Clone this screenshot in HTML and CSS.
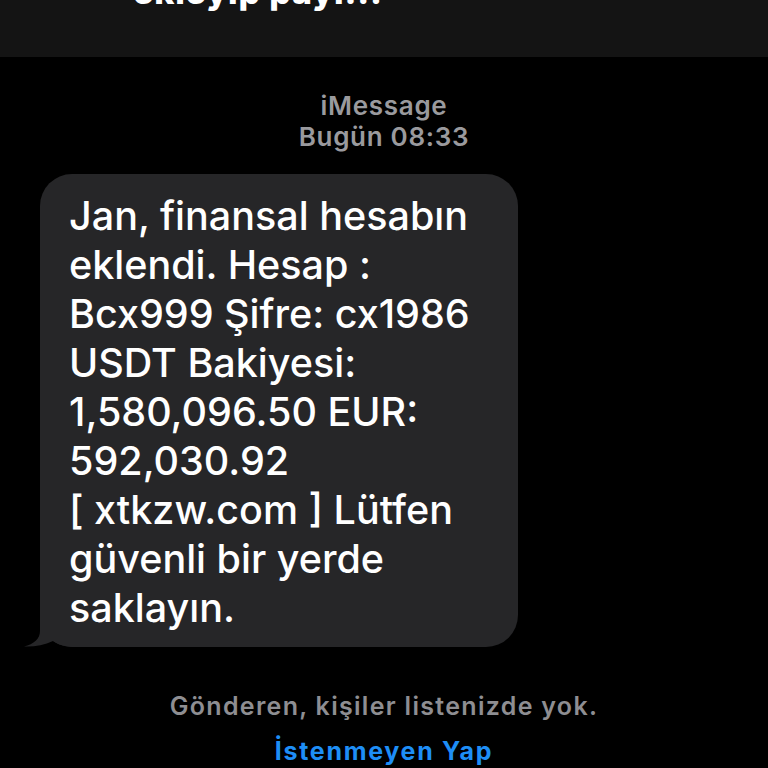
FILE: index.html
```html
<!DOCTYPE html>
<html lang="tr">
<head>
<meta charset="utf-8">
<link rel="stylesheet" href="styles.css">
</head>
<body>
<div class="screen">
  <div class="topbar"><div class="toptext">ekleyip payl...</div></div>
  <div class="header">
    <div class="service">iMessage</div>
    <div class="time">Bugün 08:33</div>
  </div>
  <div class="thread">
    <div class="bubble">
      <svg class="tail" width="60" height="40" viewBox="0 0 60 40"><path d="M16 0 V24 C16 32 10 37 0 39.5 C10 40 20 38 29 34 C33 37 38 39 48 40 H60 V0 Z" fill="#262628"/></svg>
      <p class="msg">Jan, finansal hesabın<br>eklendi. Hesap :<br>Bcx999 Şifre: cx1986<br>USDT Bakiyesi:<br>1,580,096.50 EUR:<br>592,030.92<br>[ xtkzw.com ] Lütfen<br>güvenli bir yerde<br>saklayın.</p>
    </div>
  </div>
  <div class="footer">
    <div class="note">Gönderen, kişiler listenizde yok.</div>
    <div class="junk">İstenmeyen Yap</div>
  </div>
</div>
</body>
</html>
```
FILE: styles.css
```css
html, body {
  margin: 0;
  padding: 0;
  background: #000;
}
.screen {
  width: 768px;
  height: 768px;
  overflow: hidden;
  background: #000;
  font-family: Inter, "Liberation Sans", sans-serif;
}
.topbar {
  height: 57px;
  background: #141414;
  overflow: hidden;
}
.toptext {
  margin-top: -25px;
  padding-left: 133px;
  font-size: 34px;
  line-height: 34px;
  font-weight: 800;
  letter-spacing: 0.8px;
  color: #fff;
}
.header {
  margin-top: 33px;
  text-align: center;
  color: #9a9a9e;
  font-size: 26px;
  line-height: 31px;
  font-weight: 600;
  letter-spacing: 0.7px;
}
.thread {
  margin-top: 22px;
  padding-left: 40px;
}
.bubble {
  position: relative;
  width: 478px;
  box-sizing: border-box;
  background: #262628;
  border-radius: 32px;
  padding: 18px 0 14px 29px;
}
.tail {
  position: absolute;
  left: -16px;
  bottom: 0;
}
.msg {
  position: relative;
  margin: 0;
  color: #fff;
  font-size: 39.5px;
  line-height: 49px;
  font-weight: 500;
  white-space: nowrap;
}
.footer {
  margin-top: 44px;
  text-align: center;
  font-size: 25px;
  font-weight: 600;
}
.note {
  color: #8e8e92;
  line-height: 30px;
  letter-spacing: 1.3px;
}
.junk {
  margin-top: 15px;
  color: #1e8ef6;
  font-weight: 700;
  font-size: 25px;
  line-height: 30px;
  letter-spacing: 1.7px;
}
```
